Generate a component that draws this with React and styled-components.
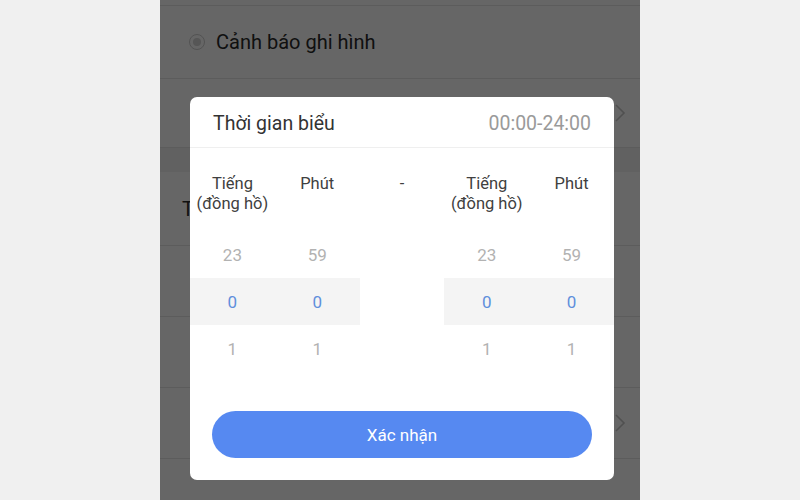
import React from "react";
import styled, { createGlobalStyle } from "styled-components";

const Global = createGlobalStyle`
  html, body { margin: 0; padding: 0; background: #f0f0f0; }
  body { font-family: Roboto, "Noto Sans", "Liberation Sans", sans-serif; }
  * { box-sizing: border-box; }
`;

const Stage = styled.div`
  width: 800px;
  height: 500px;
  display: flex;
  justify-content: center;
  background: #f0f0f0;
  overflow: hidden;
`;

const Phone = styled.div`
  position: relative;
  width: 480px;
  height: 500px;
  background: #fff;
  overflow: hidden;
  display: flex;
  flex-direction: column;
`;

const Row = styled.div`
  flex: none;
  height: ${(p) => p.$h}px;
  display: flex;
  align-items: center;
  padding: 0 14px 0 ${(p) => p.$pl || 22}px;
  border-bottom: 1px solid #e6e6e6;
  color: #2a2a2a;
  font-size: 20px;
`;

const Gap = styled.div`
  flex: none;
  height: ${(p) => p.$h}px;
  background: #f2f2f2;
`;

const Radio = styled.span`
  width: 16px;
  height: 16px;
  border-radius: 50%;
  border: 1.5px solid #cfcfcf;
  display: inline-flex;
  align-items: center;
  justify-content: center;
  margin-right: 11px;
  &::after {
    content: "";
    width: 8px;
    height: 8px;
    border-radius: 50%;
    background: #d6d6d6;
  }
`;

const RowText = styled.span`
  flex: 1;
`;

const ChevronBox = styled.span`
  margin-left: auto;
  display: flex;
`;

const Chevron = () => (
  <ChevronBox>
    <svg width="12" height="20" viewBox="0 0 12 20" fill="none">
      <path d="M2 2l8 8-8 8" stroke="#c8c8c8" strokeWidth="1.6" />
    </svg>
  </ChevronBox>
);

const Overlay = styled.div`
  position: absolute;
  inset: 0;
  background: rgba(0, 0, 0, 0.6);
  display: flex;
  flex-direction: column;
  align-items: flex-start;
  padding: 97px 0 0 30px;
`;

const Dialog = styled.div`
  width: 424px;
  background: #fff;
  border-radius: 7px;
  display: flex;
  flex-direction: column;
  padding-bottom: 22px;
`;

const Header = styled.div`
  height: 51px;
  display: flex;
  align-items: center;
  justify-content: space-between;
  padding: 3px 23px 0 23px;
  border-bottom: 1px solid #efefef;
`;

const Title = styled.span`
  font-size: 19.5px;
  color: #333;
`;

const Range = styled.span`
  font-size: 19.5px;
  color: #9a9a9a;
`;

const Columns = styled.div`
  display: grid;
  grid-template-columns: repeat(5, 1fr);
`;

const Col = styled.div`
  display: flex;
  flex-direction: column;
  align-items: stretch;
`;

const Label = styled.div`
  height: 83px;
  padding-top: 26px;
  text-align: center;
  font-size: 16.5px;
  line-height: 20px;
  color: #404040;
`;

const Cell = styled.div`
  height: 47px;
  display: flex;
  align-items: center;
  justify-content: center;
  font-size: 17px;
  color: ${(p) => (p.$active ? "#5f8fdc" : "#b2b2b2")};
  background: ${(p) => (p.$active ? "#f4f4f4" : "transparent")};
`;

const Button = styled.button`
  margin: 39px 22px 0;
  height: 47px;
  border: none;
  border-radius: 24px;
  background: #5689f1;
  color: #fff;
  font-family: inherit;
  font-size: 17px;
`;

const wheel = (top) => [
  <Cell key="a">{top}</Cell>,
  <Cell key="b" $active>0</Cell>,
  <Cell key="c">1</Cell>,
];

export default function App() {
  return (
    <>
      <Global />
      <Stage>
        <Phone>
          <Row $h={6} />
          <Row $h={73} $pl={29}>
            <Radio />
            <RowText>Cảnh báo ghi hình</RowText>
          </Row>
          <Row $h={69}>
            <Chevron />
          </Row>
          <Gap $h={24} />
          <Row $h={74}>
            <RowText>Thời gian biểu</RowText>
          </Row>
          <Row $h={71} />
          <Row $h={71} />
          <Row $h={71}>
            <Chevron />
          </Row>
          <Row $h={71} />
          <Overlay>
            <Dialog>
              <Header>
                <Title>Thời gian biểu</Title>
                <Range>00:00-24:00</Range>
              </Header>
              <Columns>
                <Col>
                  <Label>Tiếng<br />(đồng hồ)</Label>
                  {wheel(23)}
                </Col>
                <Col>
                  <Label>Phút</Label>
                  {wheel(59)}
                </Col>
                <Col>
                  <Label>-</Label>
                </Col>
                <Col>
                  <Label>Tiếng<br />(đồng hồ)</Label>
                  {wheel(23)}
                </Col>
                <Col>
                  <Label>Phút</Label>
                  {wheel(59)}
                </Col>
              </Columns>
              <Button>Xác nhận</Button>
            </Dialog>
          </Overlay>
        </Phone>
      </Stage>
    </>
  );
}
